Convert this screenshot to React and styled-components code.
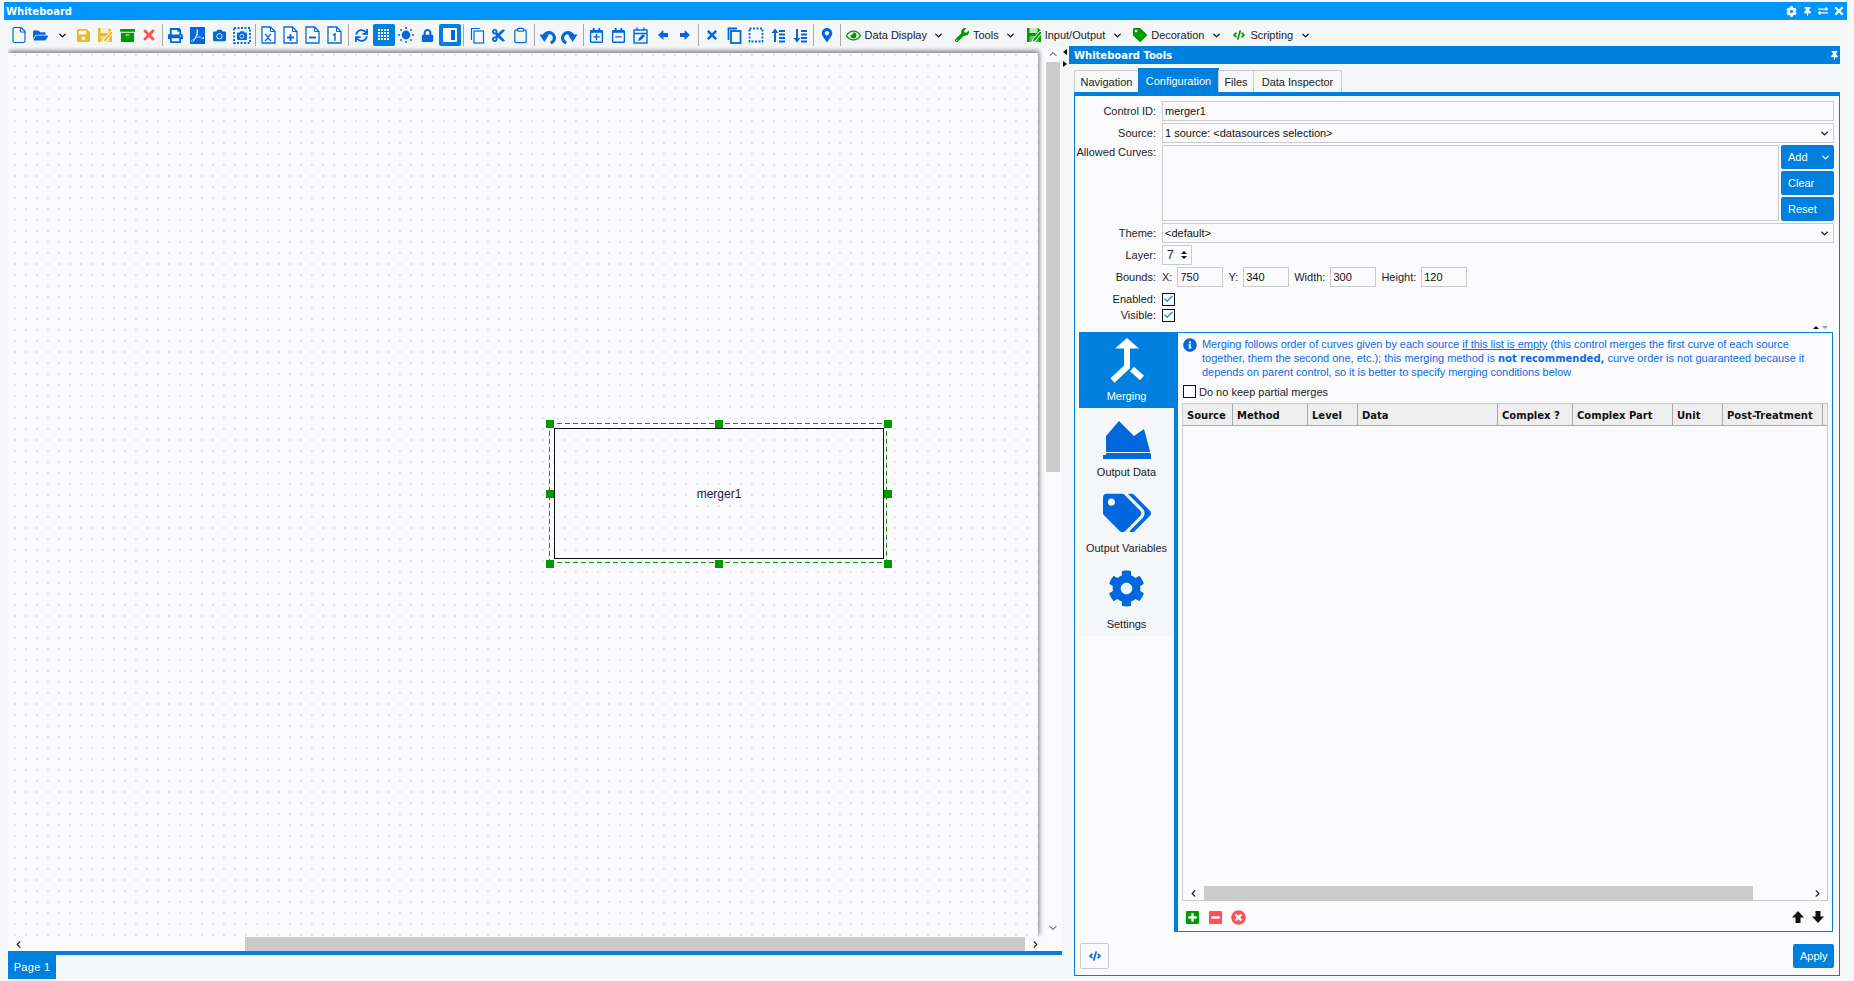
import React from "react";
import styled, { createGlobalStyle } from "styled-components";
import {
  FaFolderOpen, FaSave, FaArchive, FaTimes, FaPrint, FaCamera, FaSync, FaLock, FaCut,
  FaRegCalendarPlus, FaRegCalendarMinus,
  FaMapMarkerAlt, FaRegEye, FaWrench, FaTag, FaTags, FaCode, FaCog, FaThumbtack, FaExchangeAlt,
  FaInfoCircle, FaPlusSquare, FaMinusSquare, FaTimesCircle,
} from "react-icons/fa";
import { SiAdobeacrobatreader } from "react-icons/si";
import { ChevronDown, ChevronUp, ChevronLeft, ChevronRight, Check, File, Clipboard } from "lucide-react";

const BLUE = "#0080de";
const ICON = "#0068dc";
const GREEN = "#009a00";
const RED = "#ff5252";
const PAPER = "#fbfbfe";
const LINE = "#cbcbcb";

const GlobalStyle = createGlobalStyle`
  html, body {
    margin: 0;
    padding: 0;
    background: #f5f6f8;
    overflow: hidden;
  }
  body {
    font-family: "Liberation Sans", Arial, sans-serif;
    font-size: 11px;
    color: #222;
  }
`;

const Page = styled.div`
  width: 1854px;
  height: 981px;
  box-sizing: border-box;
  padding: 2px 7px 0 4px;
  display: flex;
  flex-direction: column;
`;

const TitleBar = styled.div`
  height: 18px;
  flex: none;
  background: #0094ff;
  color: #fff;
  font: bold 10px "DejaVu Sans", sans-serif;
  display: flex;
  align-items: center;
  padding: 0 0 0 2px;
`;

const TitleText = styled.div`
  flex: 1;
`;

const TitleIcon = styled.span`
  width: 16px;
  display: flex;
  justify-content: center;
  color: #fff;
`;

const Toolbar = styled.div`
  height: 22px;
  flex: none;
  margin-top: 4px;
  display: flex;
  align-items: stretch;
  padding-left: 4px;
`;

const ToolButton = styled.div`
  width: ${(p) => (p.$tight ? "21.67px" : "22px")};
  flex: none;
  display: flex;
  align-items: center;
  justify-content: center;
  color: ${(p) => (p.$active ? "#fff" : p.$color || ICON)};
  background: ${(p) => (p.$active ? BLUE : "transparent")};
  border-radius: 2px;
`;

const PdfBadge = styled.div`
  width: 15px;
  height: 17px;
  background: ${ICON};
  color: #fff;
  display: flex;
  align-items: center;
  justify-content: center;
`;

const ToolSeparator = styled.div`
  width: 1px;
  flex: none;
  margin: 0 2px;
  background: #a8a8a8;
`;

const MenuButton = styled.div`
  display: flex;
  align-items: center;
  flex: none;
`;

const MenuIcon = styled.div`
  width: 22px;
  display: flex;
  justify-content: center;
  color: ${GREEN};
`;

const MenuCaret = styled.div`
  width: 24px;
  display: flex;
  justify-content: center;
  color: #111;
`;

const Main = styled.div`
  flex: 1;
  min-height: 0;
  display: flex;
`;

const Designer = styled.div`
  width: 1054px;
  flex: none;
  margin-left: 4px;
  display: flex;
  flex-direction: column;
`;

const DesignerRow = styled.div`
  flex: 1;
  min-height: 0;
  display: flex;
  background: ${PAPER};
  overflow: hidden;
`;

const Viewport = styled.div`
  width: 1030px;
  flex: none;
  padding-top: 7px;
`;

const Canvas = styled.div`
  position: relative;
  height: 100%;
  background-color: ${PAPER};
  background-image: radial-gradient(circle at 1px 1px, #e4e4ec 1px, transparent 1.3px);
  background-size: 11px 11px;
  background-position: 6px 1px;
  box-shadow: 1px -2px 5px rgba(0, 0, 0, 0.55);
`;

const SelectionBox = styled.div`
  position: absolute;
  left: 541px;
  top: 370px;
  width: 338px;
  height: 140px;
  background:
    linear-gradient(90deg, ${GREEN} 5px, transparent 0) 0 0 / 8px 1px repeat-x,
    linear-gradient(90deg, ${GREEN} 5px, transparent 0) 0 100% / 8px 1px repeat-x,
    linear-gradient(${GREEN} 5px, transparent 0) 0 0 / 1px 8px repeat-y,
    linear-gradient(${GREEN} 5px, transparent 0) 100% 0 / 1px 8px repeat-y;
`;

const ControlBox = styled.div`
  position: absolute;
  left: 5px;
  top: 5px;
  width: 330px;
  height: 131px;
  box-sizing: border-box;
  border: 1.5px solid #111;
  display: flex;
  align-items: center;
  justify-content: center;
  font-size: 12px;
  color: #1c1c3a;
`;

const Handle = styled.div`
  position: absolute;
  left: ${(p) => p.$x}%;
  top: ${(p) => p.$y}%;
  width: 8px;
  height: 8px;
  margin: -3px 0 0 -3px;
  background: ${GREEN};
`;

const VScroll = styled.div`
  flex: 1;
  display: flex;
  flex-direction: column;
  align-items: center;
  padding: 2px 0 0 6px;
  height: 886px;
  color: #222;
`;

const VThumb = styled.div`
  width: 14px;
  height: 410px;
  margin: 2px 0 auto;
  background: ${LINE};
`;

const HScroll = styled.div`
  height: 14px;
  flex: none;
  display: flex;
  align-items: center;
  background: ${PAPER};
  color: #222;
  padding: 0 0 0 5px;
`;

const HScrollEnd = styled.div`
  display: flex;
  margin-left: ${(p) => p.$m}px;
`;

const HThumb = styled.div`
  height: 14px;
  width: ${(p) => p.$w}px;
  margin-left: ${(p) => p.$m}px;
  background: ${LINE};
`;

const PageBar = styled.div`
  height: 30px;
  box-sizing: border-box;
  flex: none;
  border-top: 4px solid ${BLUE};
`;

const PageTab = styled.div`
  width: 48px;
  height: 24px;
  background: ${BLUE};
  color: #fff;
  display: flex;
  align-items: center;
  justify-content: center;
  letter-spacing: 0.3px;
`;

const Gutter = styled.div`
  width: 7px;
  box-sizing: border-box;
  flex: none;
  padding: 3px 0 0 1px;
  display: flex;
  flex-direction: column;
  gap: 6px;
`;

const Arrow = styled.div`
  width: 0;
  height: 0;
  border-top: 3px solid transparent;
  border-bottom: 3px solid transparent;
  border-right: ${(p) => (p.$left ? "4px solid #111" : "0")};
  border-left: ${(p) => (p.$left ? "0" : "4px solid #111")};
`;

const Tools = styled.div`
  flex: 1;
  min-width: 0;
  margin-right: 7px;
  display: flex;
  flex-direction: column;
  padding-bottom: 5px;
`;

const ToolsHeader = styled.div`
  height: 18px;
  flex: none;
  background: ${BLUE};
  color: #fff;
  font: bold 10px "DejaVu Sans", sans-serif;
  display: flex;
  align-items: center;
  justify-content: space-between;
  padding: 0 1px 0 5px;
`;

const Tabs = styled.div`
  height: 28px;
  flex: none;
  display: flex;
  align-items: flex-end;
  padding-left: 5px;
`;

const Tab = styled.div`
  height: ${(p) => (p.$active ? "24px" : "22px")};
  width: ${(p) => p.$w}px;
  box-sizing: border-box;
  display: flex;
  align-items: center;
  justify-content: center;
  color: ${(p) => (p.$active ? "#fff" : "#222")};
  background: ${(p) => (p.$active ? BLUE : "#f7f8fa")};
  border: 1px solid ${(p) => (p.$active ? BLUE : LINE)};
  border-bottom: 0;
  margin-left: ${(p) => (p.$first ? 0 : "-1px")};
`;

const TabBody = styled.div`
  flex: 1;
  min-height: 0;
  margin-left: 5px;
  border: 1px solid ${BLUE};
  border-top-width: 4px;
  background: ${PAPER};
  display: flex;
  flex-direction: column;
`;

const Form = styled.div`
  flex: none;
  padding: 5px 5px 0 0;
  display: flex;
  flex-direction: column;
  gap: 2px;
`;

const FormRow = styled.div`
  display: grid;
  grid-template-columns: 81px 1fr;
  column-gap: 6px;
  align-items: ${(p) => (p.$top ? "start" : "center")};
  min-height: ${(p) => (p.$tiny ? "14px" : "20px")};
  margin-top: ${(p) => p.$mt || 0}px;
`;

const Label = styled.div`
  text-align: right;
  white-space: nowrap;
  color: #222;
  padding-top: ${(p) => (p.$top ? "1px" : 0)};
`;

const TextField = styled.input`
  box-sizing: border-box;
  width: ${(p) => (p.$w ? `${p.$w}px` : "100%")};
  height: 20px;
  border: 1px solid ${LINE};
  background: ${PAPER};
  padding: 0 2px;
  font: 11px "Liberation Sans", Arial, sans-serif;
  color: #111;
  outline: none;
`;

const SelectField = styled.div`
  box-sizing: border-box;
  height: 20px;
  border: 1px solid ${LINE};
  padding: 0 3px 0 2px;
  display: flex;
  align-items: center;
  justify-content: space-between;
  color: #111;
`;

const CurvesRow = styled.div`
  display: flex;
  gap: 2px;
`;

const CurvesList = styled.div`
  flex: 1;
  height: 76px;
  box-sizing: border-box;
  border: 1px solid ${LINE};
`;

const CurveButtons = styled.div`
  width: 53px;
  flex: none;
  display: flex;
  flex-direction: column;
  gap: 2px;
`;

const BlueButton = styled.div`
  height: 24px;
  width: ${(p) => (p.$w ? `${p.$w}px` : "auto")};
  border-radius: 2px;
  background: ${BLUE};
  color: #fff;
  display: flex;
  align-items: center;
  justify-content: space-between;
  padding: 0 3px 0 7px;
  box-sizing: border-box;
`;

const Spinner = styled.div`
  box-sizing: border-box;
  width: 30px;
  height: 20px;
  border: 1px solid ${LINE};
  display: flex;
  align-items: center;
  justify-content: space-between;
  padding: 0 4px;
  font-size: 12px;
`;

const SpinnerArrows = styled.div`
  display: flex;
  flex-direction: column;
  gap: 2px;
`;

const SpinTriangle = styled.div`
  width: 0;
  height: 0;
  border-left: 3px solid transparent;
  border-right: 3px solid transparent;
  border-bottom: ${(p) => (p.$up ? "3px solid #111" : "0")};
  border-top: ${(p) => (p.$up ? "0" : "3px solid #111")};
`;

const Bounds = styled.div`
  display: flex;
  align-items: center;
  gap: 5px;
`;

const CheckBox = styled.div`
  box-sizing: border-box;
  width: 13px;
  height: 13px;
  border: 1px solid #111;
  background: ${PAPER};
  display: flex;
  align-items: center;
  justify-content: center;
  color: #2a8ae6;
  flex: none;
`;

const SplitterMarks = styled.div`
  height: 10px;
  flex: none;
  display: flex;
  justify-content: flex-end;
  align-items: center;
  gap: 3px;
  padding-right: 11px;
`;

const SplitterMark = styled(SpinTriangle)`
  border-bottom-color: ${(p) => (p.$dim ? "#999" : "#111")};
  border-top-color: ${(p) => (p.$dim ? "#999" : "#111")};
`;

const MergeSection = styled.div`
  flex: none;
  height: 600px;
  margin: 0 6px 0 4px;
  display: flex;
`;

const SideNav = styled.div`
  width: 95px;
  flex: none;
  align-self: flex-start;
  background: #f5f6f8;
`;

const NavItem = styled.div`
  height: 76px;
  box-sizing: border-box;
  display: flex;
  flex-direction: column;
  align-items: center;
  background: ${(p) => (p.$active ? BLUE : "transparent")};
  color: ${(p) => (p.$active ? "#fff" : "#222")};
`;

const NavIcon = styled.div`
  height: 58px;
  flex: none;
  display: flex;
  align-items: center;
  justify-content: center;
  padding-bottom: 1px;
  box-sizing: border-box;
  color: ${(p) => (p.$active ? "#fff" : ICON)};
`;

const MergeBody = styled.div`
  flex: 1;
  min-width: 0;
  border: 1px solid ${BLUE};
  border-left: 4px solid ${BLUE};
  padding: 4px;
  display: flex;
  flex-direction: column;
`;

const InfoRow = styled.div`
  display: flex;
  gap: 5px;
  color: #0a6ce2;
  line-height: 14px;
  padding-left: 1px;
`;

const InfoIcon = styled.div`
  flex: none;
  width: 14px;
  padding-top: 1px;
  color: ${ICON};
`;

const InfoText = styled.div`
  flex: 1;
  u {
    text-decoration: underline;
  }
  b {
    font: bold 10px "DejaVu Sans", sans-serif;
    letter-spacing: 0;
  }
`;

const InfoLine = styled.div`
  height: 14px;
  white-space: nowrap;
  letter-spacing: ${(p) => (p.$wide ? "0" : "-0.05px")};
`;

const KeepRow = styled.div`
  display: flex;
  align-items: center;
  gap: 3px;
  height: 13px;
  margin: 6px 0 5px 1px;
`;

const DataTable = styled.div`
  flex: 1;
  min-height: 0;
  border: 1px solid ${LINE};
  display: flex;
  flex-direction: column;
`;

const TableHead = styled.div`
  height: 22px;
  flex: none;
  box-sizing: border-box;
  display: flex;
  background: #eeeeee;
  border-bottom: 1px solid #a9a9a9;
`;

const HeadCell = styled.div`
  width: ${(p) => p.$w}px;
  flex: none;
  box-sizing: border-box;
  border-right: 1px solid #a9a9a9;
  padding: 1px 0 0 4px;
  display: flex;
  align-items: center;
  font: bold 10px "DejaVu Sans", sans-serif;
  color: #111;
  white-space: nowrap;
  &:last-child {
    border-right: 0;
  }
`;

const TableBody = styled.div`
  flex: 1;
  min-height: 0;
`;

const TableTools = styled.div`
  height: 30px;
  box-sizing: border-box;
  flex: none;
  margin-bottom: -4px;
  display: flex;
  align-items: center;
  gap: 8px;
  padding: 2px 4px 0 3px;
`;

const ToolsSpacer = styled.div`
  flex: 1;
`;

const SmallIcon = styled.span`
  display: flex;
  color: ${(p) => p.$color};
`;

const Footer = styled.div`
  flex: 1;
  display: flex;
  align-items: center;
  justify-content: space-between;
  padding: 5px 5px 0 5px;
`;

const CodeButton = styled.div`
  width: 29px;
  height: 26px;
  box-sizing: border-box;
  border: 1px solid ${LINE};
  border-radius: 2px;
  display: flex;
  align-items: center;
  justify-content: center;
  color: ${ICON};
`;

const DocIcon = ({ children }) => (
  <svg width="15" height="18" viewBox="0 0 15 18">
    <path d="M1 1h8.5L14 5.5V17H1z" fill="#fff" stroke={ICON} strokeWidth="1.3" />
    <path d="M9.5 1v4.5H14" fill="none" stroke={ICON} strokeWidth="1" />
    {children}
  </svg>
);

const SaveEdit = ({ color }) => (
  <svg width="16" height="16" viewBox="0 0 16 16">
    <path d="M1 1h11l3 3v11H1z" fill={color} />
    <rect x="3.5" y="1" width="8" height="5" fill="#fff" opacity="0.75" />
    <rect x="3.5" y="9" width="9" height="6" fill="#fff" opacity="0.4" />
    <path d="M7 12l7-8 2 2-7 8-3 1z" fill={color} stroke="#fff" strokeWidth="1" />
  </svg>
);

const GridIcon = () => (
  <svg width="12" height="12" viewBox="0 0 12 12" fill="#fff">
    {[0, 3, 6, 9].map((y) =>
      [0, 3, 6, 9].map((x) => <rect key={`${x}-${y}`} x={x} y={y} width="2" height="2" />)
    )}
  </svg>
);

const SunIcon = () => (
  <svg width="16" height="16" viewBox="0 0 16 16" fill={ICON}>
    <circle cx="8" cy="8" r="4.4" />
    {[[8, 1], [8, 15], [1, 8], [15, 8], [3, 3], [13, 3], [3, 13], [13, 13]].map(([x, y]) => (
      <circle key={`${x}-${y}`} cx={x} cy={y} r="1" />
    ))}
  </svg>
);

const PanelIcon = () => (
  <svg width="16" height="16" viewBox="0 0 16 16">
    <rect x="1" y="1" width="14" height="14" rx="1" fill="#fff" />
    <rect x="9" y="3" width="4" height="10" fill={ICON} />
  </svg>
);

const CopyIcon = ({ heavy }) => (
  <svg width="16" height="17" viewBox="0 0 16 17" fill="none" stroke={ICON} strokeWidth={heavy ? 1.8 : 1.2}>
    <path d="M11 1.5H2.5V13" />
    <rect x="5" y="4" width="9.5" height="12" />
  </svg>
);

const DashedIcon = () => (
  <svg width="16" height="17" viewBox="0 0 16 17" fill="none" stroke={ICON} strokeWidth="1.8">
    <rect x="1.5" y="1.5" width="13" height="13" strokeDasharray="2 1.5" />
  </svg>
);

const DashedCamera = () => (
  <svg width="18" height="17" viewBox="0 0 18 17">
    <rect x="1" y="1" width="16" height="15" fill="none" stroke={ICON} strokeWidth="1.8" strokeDasharray="2 1.5" />
    <FaCamera x="4" y="3.5" size="10" />
  </svg>
);

const TurnIcon = ({ flip }) => (
  <svg width="17" height="17" viewBox="0 0 16 16" style={flip ? { transform: "scaleX(-1)" } : undefined}>
    <path d="M5 8A5 5 0 1 1 11 15" fill="none" stroke={ICON} strokeWidth="3" />
    <path d="M0.5 7h9L5 14z" fill={ICON} />
  </svg>
);

const CalendarEdit = () => (
  <svg width="15" height="17" viewBox="0 0 15 17" fill="none" stroke={ICON} strokeWidth="1.4">
    <rect x="1" y="3" width="13" height="13" />
    <path d="M1 6.5h13M4 0.5v3M11 0.5v3" />
    <path d="M5 14l1-3 4-4 2 2-4 4z" fill={ICON} stroke="none" />
  </svg>
);

const SortIcon = ({ down }) => (
  <svg width="14" height="15" viewBox="0 0 14 15" fill={ICON}>
    <path d={down ? "M3 1v9H0.5L4 14.5 7.5 10H5V1z" : "M3 14V5H0.5L4 0.5 7.5 5H5v9z"} />
    <rect x="8" y="2" width="6" height="2" />
    <rect x="8" y="5.5" width="6" height="2" />
    <rect x="8" y="9" width="6" height="2" />
    <rect x="8" y="12.5" width="6" height="2" />
  </svg>
);

const paths = {
  up: "M6 0l6 6.5H8.5V12h-5V6.5H0z",
  down: "M6 12l6-6.5H8.5V0h-5v5.5H0z",
  left: "M0 6l6.5-6v3.5H12v5H6.5V12z",
  right: "M12 6L5.5 0v3.5H0v5h5.5V12z",
};

const BlockArrow = ({ dir, size = 12, color = "currentColor" }) => (
  <svg width={size} height={size} viewBox="0 0 12 12" fill={color}>
    <path d={paths[dir]} />
  </svg>
);

const MergeIcon = () => (
  <svg width="34" height="45" viewBox="0 0 34 45" fill="none" stroke="currentColor" strokeWidth="6">
    <path d="M5 10.5L17 0l12 10.5z" fill="currentColor" stroke="none" />
    <path d="M17 9v20L2.5 42.5" />
    <path d="M22 31l10 9" />
  </svg>
);

const AreaIcon = () => (
  <svg width="48" height="44" viewBox="0 -6 48 44" fill="currentColor">
    <path d="M3 15L16 0l15 15 10-7 7 26H3z" />
    <rect x="0" y="34" width="48" height="4" />
    <rect x="0" y="31" width="48" height="1" fill={PAPER} />
  </svg>
);

const T = ({ children, ...rest }) => <ToolButton {...rest}>{children}</ToolButton>;

const caret = <ChevronDown size={11} strokeWidth={3} color="#111" />;

const menus = [
  { label: "Data Display", icon: <FaRegEye size={15} /> },
  { label: "Tools", icon: <FaWrench size={14} /> },
  { label: "Input/Output", icon: <SaveEdit color={GREEN} /> },
  { label: "Decoration", icon: <FaTag size={14} /> },
  { label: "Scripting", icon: <FaCode size={12} /> },
];

const columns = [
  ["Source", 50], ["Method", 75], ["Level", 50], ["Data", 140], ["Complex ?", 75],
  ["Complex Part", 100], ["Unit", 50], ["Post-Treatment", 100], ["", 5],
];

const handles = [
  [0, 0], [50, 0], [100, 0], [0, 50], [100, 50], [0, 100], [50, 100], [100, 100],
];

const navItems = [
  { label: "Merging", icon: <MergeIcon />, active: true },
  { label: "Output Data", icon: <AreaIcon /> },
  { label: "Output Variables", icon: <FaTags size={48} /> },
  { label: "Settings", icon: <FaCog size={37} /> },
];

export default function App() {
  return (
    <Page>
      <GlobalStyle />
      <TitleBar>
        <TitleText>Whiteboard</TitleText>
        <TitleIcon><FaCog size={11} /></TitleIcon>
        <TitleIcon><FaThumbtack size={9} /></TitleIcon>
        <TitleIcon><FaExchangeAlt size={10} /></TitleIcon>
        <TitleIcon><FaTimes size={12} /></TitleIcon>
      </TitleBar>

      <Toolbar>
        <T $tight><File size={18} strokeWidth={1.6} /></T>
        <T $tight><FaFolderOpen size={15} /></T>
        <T $tight>{caret}</T>
        <T $tight $color="#e9bb2a"><FaSave size={15} /></T>
        <T $tight><SaveEdit color="#e9bb2a" /></T>
        <T $tight $color={GREEN}><FaArchive size={15} /></T>
        <T $tight $color={RED}><FaTimes size={16} /></T>
        <ToolSeparator />
        <T><FaPrint size={15} /></T>
        <T><PdfBadge><SiAdobeacrobatreader size={13} /></PdfBadge></T>
        <T><FaCamera size={13} /></T>
        <T><DashedCamera /></T>
        <ToolSeparator />
        <T><DocIcon><path d="M4 8l3 3 3-3M4 15l3-3 3 3" fill="none" stroke={ICON} strokeWidth="1.4" /></DocIcon></T>
        <T><DocIcon><path d="M7.5 8v7M4 11.5h7" stroke={ICON} strokeWidth="1.8" /></DocIcon></T>
        <T><DocIcon><path d="M4 11.5h7" stroke={ICON} strokeWidth="2" /></DocIcon></T>
        <T><DocIcon><path d="M6 9l2-1v7" fill="none" stroke={ICON} strokeWidth="1.4" /></DocIcon></T>
        <ToolSeparator />
        <T><FaSync size={13} /></T>
        <T $active><GridIcon /></T>
        <T><SunIcon /></T>
        <T><FaLock size={13} /></T>
        <T $active><PanelIcon /></T>
        <ToolSeparator />
        <T><CopyIcon /></T>
        <T><FaCut size={15} /></T>
        <T><Clipboard size={17} strokeWidth={1.7} /></T>
        <ToolSeparator />
        <T><TurnIcon /></T>
        <T><TurnIcon flip /></T>
        <ToolSeparator />
        <T><FaRegCalendarPlus size={15} /></T>
        <T><FaRegCalendarMinus size={15} /></T>
        <T><CalendarEdit /></T>
        <T><BlockArrow dir="left" size={10} /></T>
        <T><BlockArrow dir="right" size={10} /></T>
        <ToolSeparator />
        <T><FaTimes size={14} /></T>
        <T><CopyIcon heavy /></T>
        <T><DashedIcon /></T>
        <T><SortIcon /></T>
        <T><SortIcon down /></T>
        <ToolSeparator />
        <T><FaMapMarkerAlt size={14} /></T>
        <ToolSeparator />
        {menus.map((m) => (
          <MenuButton key={m.label}>
            <MenuIcon>{m.icon}</MenuIcon>
            {m.label}
            <MenuCaret>{caret}</MenuCaret>
          </MenuButton>
        ))}
      </Toolbar>

      <Main>
        <Designer>
          <DesignerRow>
            <Viewport>
              <Canvas>
                <SelectionBox>
                  <ControlBox>merger1</ControlBox>
                  {handles.map(([x, y]) => <Handle key={`${x}-${y}`} $x={x} $y={y} />)}
                </SelectionBox>
              </Canvas>
            </Viewport>
            <VScroll>
              <ChevronUp size={12} />
              <VThumb />
              <ChevronDown size={12} />
            </VScroll>
          </DesignerRow>
          <HScroll>
            <ChevronLeft size={11} strokeWidth={2.4} />
            <HThumb $m={221} $w={780} />
            <HScrollEnd $m={5}><ChevronRight size={11} strokeWidth={2.4} /></HScrollEnd>
          </HScroll>
          <PageBar>
            <PageTab>Page 1</PageTab>
          </PageBar>
        </Designer>

        <Gutter>
          <Arrow $left />
          <Arrow />
        </Gutter>

        <Tools>
          <ToolsHeader>
            Whiteboard Tools
            <FaThumbtack size={9} />
          </ToolsHeader>
          <Tabs>
            <Tab $first $w={65}>Navigation</Tab>
            <Tab $active $w={81}>Configuration</Tab>
            <Tab $w={36}>Files</Tab>
            <Tab $w={89}>Data Inspector</Tab>
          </Tabs>
          <TabBody>
            <Form>
              <FormRow>
                <Label>Control ID:</Label>
                <TextField readOnly value="merger1" />
              </FormRow>
              <FormRow>
                <Label>Source:</Label>
                <SelectField>1 source: &lt;datasources selection&gt;{caret}</SelectField>
              </FormRow>
              <FormRow $top>
                <Label $top>Allowed Curves:</Label>
                <CurvesRow>
                  <CurvesList />
                  <CurveButtons>
                    <BlueButton>Add<ChevronDown size={11} strokeWidth={2.6} /></BlueButton>
                    <BlueButton>Clear</BlueButton>
                    <BlueButton>Reset</BlueButton>
                  </CurveButtons>
                </CurvesRow>
              </FormRow>
              <FormRow>
                <Label>Theme:</Label>
                <SelectField>&lt;default&gt;{caret}</SelectField>
              </FormRow>
              <FormRow>
                <Label>Layer:</Label>
                <Spinner>
                  7
                  <SpinnerArrows>
                    <SpinTriangle $up />
                    <SpinTriangle />
                  </SpinnerArrows>
                </Spinner>
              </FormRow>
              <FormRow>
                <Label>Bounds:</Label>
                <Bounds>
                  X:
                  <TextField readOnly value="750" $w={46} />
                  Y:
                  <TextField readOnly value="340" $w={46} />
                  Width:
                  <TextField readOnly value="300" $w={46} />
                  Height:
                  <TextField readOnly value="120" $w={46} />
                </Bounds>
              </FormRow>
              <FormRow $tiny $mt={3}>
                <Label>Enabled:</Label>
                <CheckBox><Check size={12} strokeWidth={3} /></CheckBox>
              </FormRow>
              <FormRow $tiny>
                <Label>Visible:</Label>
                <CheckBox><Check size={12} strokeWidth={3} /></CheckBox>
              </FormRow>
            </Form>
            <SplitterMarks>
              <SplitterMark $up />
              <SplitterMark $dim />
            </SplitterMarks>
            <MergeSection>
              <SideNav>
                {navItems.map((n) => (
                  <NavItem key={n.label} $active={n.active}>
                    <NavIcon $active={n.active}>{n.icon}</NavIcon>
                    {n.label}
                  </NavItem>
                ))}
              </SideNav>
              <MergeBody>
                <InfoRow>
                  <InfoIcon><FaInfoCircle size={14} /></InfoIcon>
                  <InfoText>
                    <InfoLine>Merging follows order of curves given by each source <u>if this list is empty</u> (this control merges the first curve of each source</InfoLine>
                    <InfoLine $wide>together, them the second one, etc.); this merging method is <b>not recommended,</b> curve order is not guaranteed because it</InfoLine>
                    <InfoLine>depends on parent control, so it is better to specify merging conditions below</InfoLine>
                  </InfoText>
                </InfoRow>
                <KeepRow>
                  <CheckBox />
                  Do no keep partial merges
                </KeepRow>
                <DataTable>
                  <TableHead>
                    {columns.map(([name, w]) => <HeadCell key={name || "end"} $w={w}>{name}</HeadCell>)}
                  </TableHead>
                  <TableBody />
                  <HScroll>
                    <ChevronLeft size={11} strokeWidth={2.4} />
                    <HThumb $m={5} $w={549} />
                    <HScrollEnd $m={59}><ChevronRight size={11} strokeWidth={2.4} /></HScrollEnd>
                  </HScroll>
                </DataTable>
                <TableTools>
                  <SmallIcon $color={GREEN}><FaPlusSquare size={15} /></SmallIcon>
                  <SmallIcon $color={RED}><FaMinusSquare size={15} /></SmallIcon>
                  <SmallIcon $color={RED}><FaTimesCircle size={15} /></SmallIcon>
                  <ToolsSpacer />
                  <SmallIcon><BlockArrow dir="up" color="#111" /></SmallIcon>
                  <SmallIcon><BlockArrow dir="down" color="#111" /></SmallIcon>
                </TableTools>
              </MergeBody>
            </MergeSection>
            <Footer>
              <CodeButton><FaCode size={12} /></CodeButton>
              <BlueButton $w={41}>Apply</BlueButton>
            </Footer>
          </TabBody>
        </Tools>
      </Main>
    </Page>
  );
}
